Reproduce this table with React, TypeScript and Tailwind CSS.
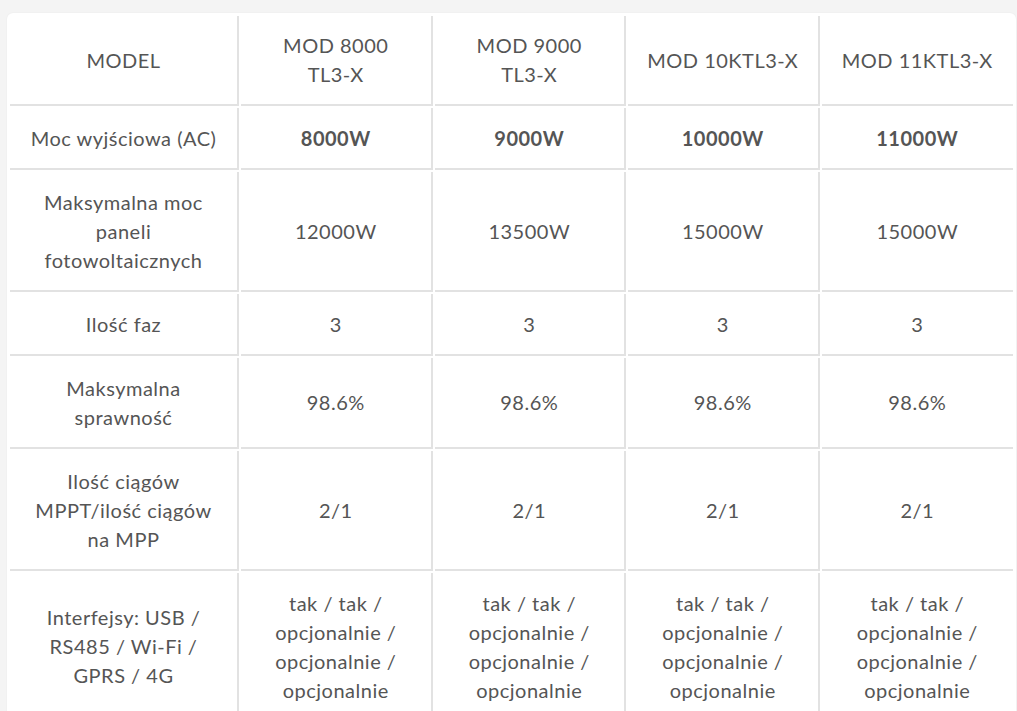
import React from 'react';

type Row = { label: string; values: string[]; bold?: boolean };

const models = [
  ['MOD 8000', 'TL3-X'],
  ['MOD 9000', 'TL3-X'],
  ['MOD', '10KTL3-X'],
  ['MOD', '11KTL3-X'],
];

const rows: Row[] = [
  { label: 'Moc wyjściowa (AC)', values: ['8000W', '9000W', '10000W', '11000W'], bold: true },
  { label: 'Maksymalna moc paneli fotowoltaicznych', values: ['12000W', '13500W', '15000W', '15000W'] },
  { label: 'Ilość faz', values: ['3', '3', '3', '3'] },
  { label: 'Maksymalna sprawność', values: ['98.6%', '98.6%', '98.6%', '98.6%'] },
  { label: 'Ilość ciągów MPPT/ilość ciągów na MPP', values: ['2/1', '2/1', '2/1', '2/1'] },
  {
    label: 'Interfejsy: USB / RS485 / Wi-Fi / GPRS / 4G',
    values: Array(4).fill('tak / tak / opcjonalnie / opcjonalnie / opcjonalnie'),
  },
];

const cell = 'border-b-2 border-r-2 border-[#e2e2e2] px-[18px] text-center align-middle last:border-r-0';

export default function App() {
  return (
    <div
      className="min-h-[711px] overflow-hidden bg-[#f4f4f4] pt-[13px] pl-[7px] pr-[1px]"
      style={{ fontFamily: 'Lato, "Open Sans", sans-serif' }}
    >
      <div className="rounded-md bg-white p-px shadow-[0_0_2px_rgba(0,0,0,0.06)]">
        <table className="w-full table-fixed border-separate border-spacing-[2px] text-[20px] leading-[29px] tracking-[0.5px] text-[#555]">
          <colgroup>
            <col className="w-[229px]" />
            <col />
            <col />
            <col />
            <col />
          </colgroup>
          <thead>
            <tr>
              <th className={`${cell} h-[90px] py-[15px] font-normal`}>MODEL</th>
              {models.map(([a, b]) => (
                <th key={b + a} className={`${cell} py-[15px] font-normal`}>
                  {a} <span className="whitespace-nowrap">{b}</span>
                </th>
              ))}
            </tr>
          </thead>
          <tbody>
            {rows.map((r) => (
              <tr key={r.label}>
                <td className={`${cell} py-[15.5px]`}>{r.label}</td>
                {r.values.map((v, i) => (
                  <td key={i} className={`${cell} py-[15.5px] ${r.bold ? 'font-bold' : ''}`}>
                    {v}
                  </td>
                ))}
              </tr>
            ))}
          </tbody>
        </table>
      </div>
    </div>
  );
}
